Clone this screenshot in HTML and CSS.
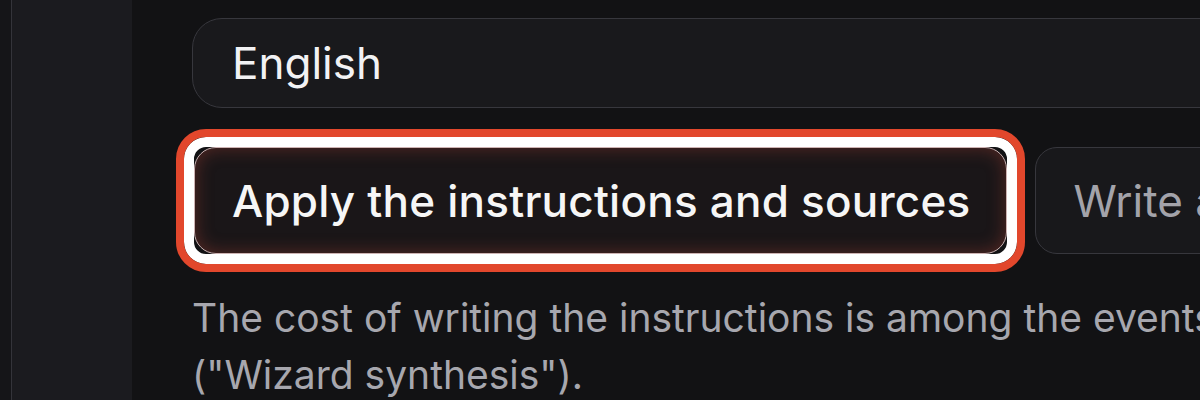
FILE: index.html
```html
<!DOCTYPE html>
<html lang="en">
<head>
<meta charset="utf-8">
<title>Wizard</title>
<link rel="stylesheet" href="styles.css">
</head>
<body>
<div class="app">
  <div class="rail"></div>
  <aside class="sidebar"></aside>
  <main class="main">
    <div class="field">English</div>
    <div class="choices">
      <div class="choice-wrap">
        <button class="choice choice-active">Apply the instructions and sources</button>
        <span class="highlight"></span>
      </div>
      <button class="choice">Write a new set of instructions</button>
    </div>
    <p class="note">The cost of writing the instructions is among the events shown in the usage log<br>("Wizard synthesis").</p>
  </main>
</div>
</body>
</html>
```
FILE: styles.css
```css
html, body {
  margin: 0;
  padding: 0;
  height: 100%;
  overflow: hidden;
  background: #121214;
  font-family: Inter, "Noto Sans", sans-serif;
}
.app {
  display: flex;
  height: 400px;
}
.rail {
  width: 11px;
  flex: none;
  background: #151518;
  border-right: 1.5px solid #34343a;
}
.sidebar {
  width: 120px;
  flex: none;
  background: #1b1b1f;
}
.main {
  flex: none;
  width: 1500px;
  padding: 18px 0 0 60px;
  box-sizing: border-box;
}
.field {
  height: 90px;
  box-sizing: border-box;
  display: flex;
  align-items: center;
  padding-left: 39px;
  border: 1.5px solid #37373d;
  border-radius: 30px;
  background: #19191c;
  color: #f2f2f4;
  font-size: 44px;
  font-weight: 400;
}
.choices {
  display: flex;
  gap: 28px;
  margin-top: 39px;
  margin-left: 2px;
}
.choice-wrap {
  position: relative;
  display: flex;
}
.choice {
  height: 107px;
  box-sizing: border-box;
  padding: 0 36px 0 37px;
  border: 1.5px solid #37373d;
  border-radius: 22px;
  background: #18181b;
  color: #a3a3aa;
  font-family: inherit;
  font-size: 44px;
  font-weight: 400;
  white-space: nowrap;
}
.choice-active {
  color: #f6f6f6;
  font-weight: 500;
  letter-spacing: 0.22px;
  border-color: #cdb3b3;
  background: #1a1618;
  box-shadow: inset 0 0 18px rgba(190, 70, 55, 0.38);
}
.highlight {
  position: absolute;
  top: -18px;
  left: -18px;
  right: -18px;
  bottom: -18px;
  border: 8px solid #e2472c;
  border-radius: 30px;
  box-shadow: inset 0 0 0 10px #ffffff;
  pointer-events: none;
}
.note {
  margin: 35px 0 0 0;
  color: #a7a7ae;
  font-size: 39px;
  line-height: 57px;
  white-space: nowrap;
}
```
